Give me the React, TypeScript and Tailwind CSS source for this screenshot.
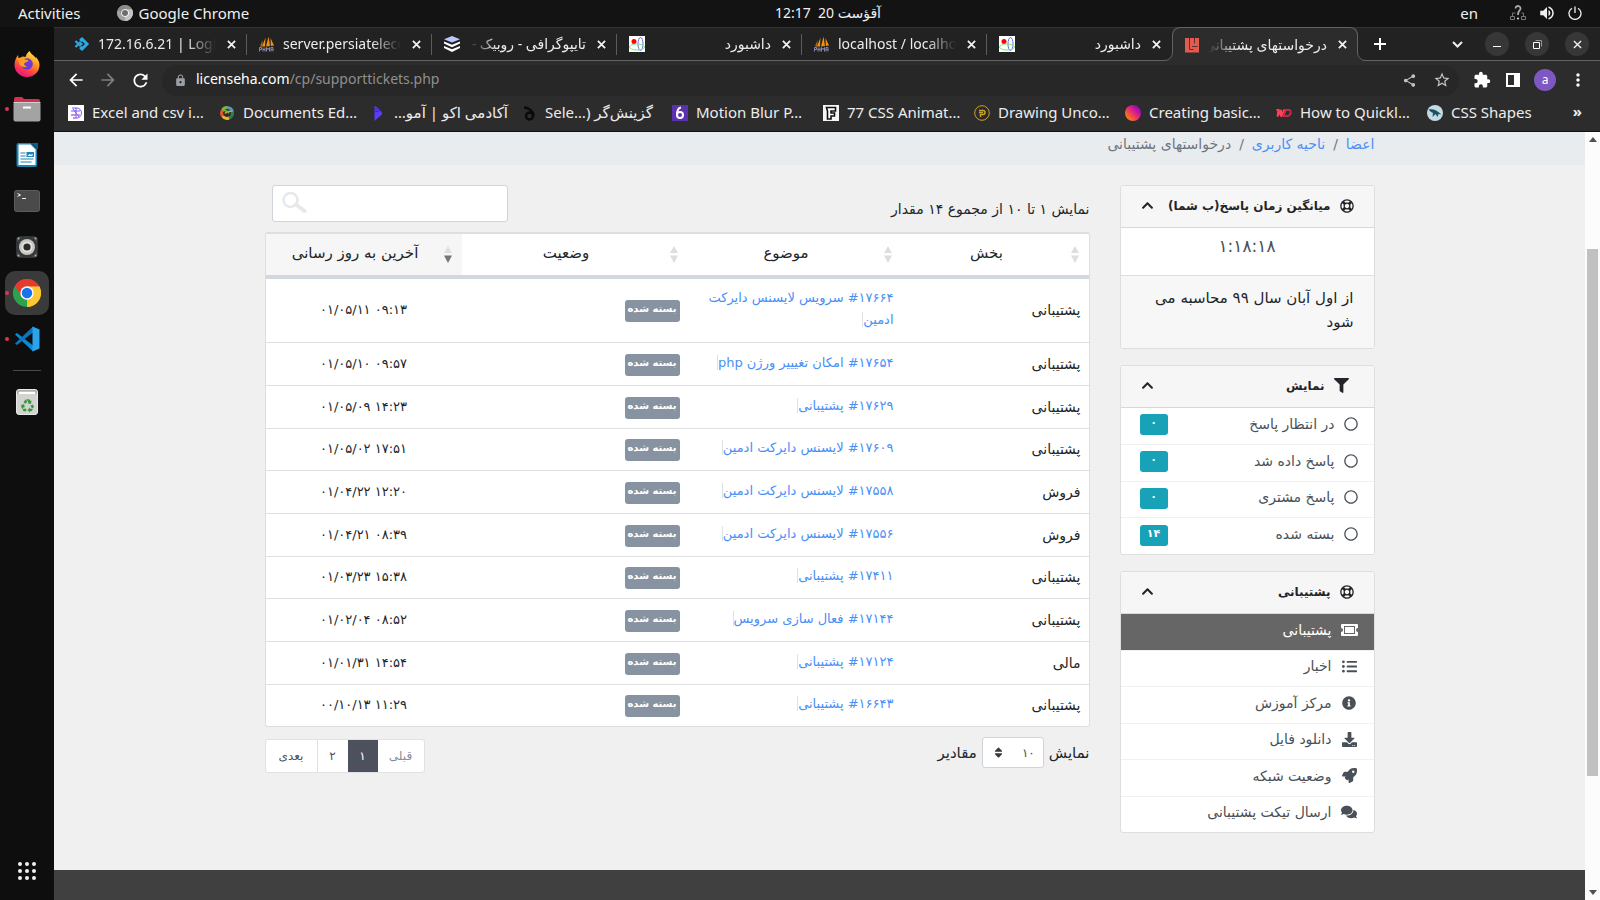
import type { ReactNode } from 'react';
import {
  FaChevronUp,
  FaComments,
  FaDownload,
  FaFilter,
  FaInfoCircle,
  FaListUl,
  FaRegCircle,
  FaRegLifeRing,
  FaRocket,
  FaSort,
} from 'react-icons/fa';
import {
  MdArrowBack,
  MdArrowForward,
  MdExtension,
  MdLock,
  MdMoreVert,
  MdRecycling,
  MdRefresh,
  MdShare,
  MdStarBorder,
  MdVolumeUp,
} from 'react-icons/md';

/* ---------- small drawings ---------- */

const ChromeLogo = ({ size, mono = false }: { size: number; mono?: boolean }) => (
  <svg width={size} height={size} viewBox="0 0 48 48" aria-hidden="true">
    <path d="M24 24 3.2 12A24 24 0 0 1 44.8 12Z" fill={mono ? '#8b8b8b' : '#ea4335'} />
    <path d="M24 24 44.8 12A24 24 0 0 1 24 48Z" fill={mono ? '#c4c4c4' : '#fbc116'} />
    <path d="M24 24V48A24 24 0 0 1 3.2 12Z" fill={mono ? '#a2a2a2' : '#2ba24c'} />
    <path d="M24 13h20.8A24 24 0 0 0 3.2 12l11.2 17.500Z" fill={mono ? '#8b8b8b' : '#e33b2e'} />
    <path d="M33.500 29.500 24 48A24 24 0 0 0 44.800 13H24Z" fill={mono ? '#c4c4c4' : '#fcc934'} />
    <circle cx="24" cy="24" r="11.500" fill="#fff" />
    <circle cx="24" cy="24" r="9" fill={mono ? '#6d6d6d' : '#1a73e8'} />
  </svg>
);

const Firefox = () => (
  <svg width="26" height="27" viewBox="0 0 26 27" aria-hidden="true">
    <defs>
      <linearGradient id="ff" x1="0.8" y1="0" x2="0.3" y2="1">
        <stop offset="0" stopColor="#fff04a" />
        <stop offset="0.4" stopColor="#ff9a1f" />
        <stop offset="0.75" stopColor="#ff3750" />
        <stop offset="1" stopColor="#e31587" />
      </linearGradient>
    </defs>
    <path d="M15.500 1c1 2 2 3 4 4.500 1 1 1.500 1.500 2 2.500l.5-1c2 2.500 3.500 5 3.500 8A12.500 12 0 0 1 .5 15C.5 11 2 7.500 4 5l.5 3 2-.5C8.500 6 10 6.500 11.500 7c1-3 2-4.500 4-6Z" fill="url(#ff)" />
    <circle cx="13" cy="14" r="5.800" fill="#6a3bd8" />
    <path d="M3 8c3 0 5-.5 7 1 1.500 1 3 .5 4.500 1.500-1 2-3 1.500-4 2.500-1 1.500.5 3.500 3 3.500-4 2-8-1-8.500-4Z" fill="#ff9d22" />
  </svg>
);

const Files = () => (
  <svg width="28" height="26" viewBox="0 0 28 26" aria-hidden="true">
    <path d="M1 3a2 2 0 0 1 2-2h6l2 2h14a2 2 0 0 1 2 2v8H1Z" fill="#d2324f" />
    <rect x="0.500" y="6" width="27" height="19.500" rx="2" fill="#a3a3a3" />
    <rect x="0.500" y="6" width="27" height="1" fill="#d0d0d0" />
    <rect x="10" y="10.500" width="8" height="2" rx="0.500" fill="#fff" />
  </svg>
);

const Writer = () => (
  <svg width="22" height="26" viewBox="0 0 22 26" aria-hidden="true">
    <path d="M2.500 1H15l6 6v16a2 2 0 0 1-2 2H2.500a2 2 0 0 1-2-2V3a2 2 0 0 1 2-2Z" fill="#1a83b8" />
    <path d="M3 2.500h11.500l5 5V23H2.500V3Z" fill="#fff" />
    <path d="M15.500 1H22v6.500Z" fill="#0f5f8c" />
    <path d="M4.500 11h5m-5 3h5m-5 3h13m-13 3h11" stroke="#1a83b8" strokeWidth="1.200" />
    <rect x="10.500" y="10" width="7.500" height="5" fill="#1a83b8" />
    <path d="m11.500 14 2-2 1.500 1 1.500-1.500V14Z" fill="#fff" />
  </svg>
);

const Terminal = () => (
  <svg width="26" height="22" viewBox="0 0 26 22" aria-hidden="true">
    <rect x="0.500" y="0.500" width="25" height="21" rx="2" fill="#4a4a4a" stroke="#5c5c5c" />
    <path d="m3.500 3.500 3 1.500-3 1.500M8 8.500h4" stroke="#eee" fill="none" strokeWidth="1" />
  </svg>
);

const Speaker = () => (
  <svg width="24" height="24" viewBox="0 0 24 24" aria-hidden="true">
    <rect x="1.500" y="1.500" width="21" height="21" rx="3" fill="#4b4f50" />
    <circle cx="12" cy="12" r="11" fill="#33383a" />
    <circle cx="12" cy="12" r="8" fill="#c8c4bf" />
    <circle cx="12" cy="12" r="5.500" fill="#e4e1dc" />
    <circle cx="12" cy="12" r="3.600" fill="#2b2b2b" />
    <g fill="#aaa">
      <circle cx="3.500" cy="3.500" r="1" />
      <circle cx="20.500" cy="3.500" r="1" />
      <circle cx="3.500" cy="20.500" r="1" />
      <circle cx="20.500" cy="20.500" r="1" />
    </g>
  </svg>
);

const VsCode = () => (
  <svg width="26" height="26" viewBox="0 0 26 26" aria-hidden="true">
    <path d="M1 8.500 3 7l16 12.500V25.500Z" fill="#0d8ad6" />
    <path d="M1 17.500 3 19 19 6.500V.5Z" fill="#0b74bb" />
    <path d="M18.500.5 25.500 3.500v19l-7 3Z" fill="#2ba4ee" />
  </svg>
);

const Trash = () => (
  <span className="relative block h-[26px] w-[22px] rounded-[3px] border border-[#e8e8e8] bg-[#d3d3d0]">
    <svg width="20" height="6" viewBox="0 0 20 6" className="block" aria-hidden="true">
      <path d="M1 4V1h18v3" stroke="#8a8a8a" fill="#fff" />
    </svg>
    <MdRecycling size={15} color="#2f9a34" className="absolute left-[3px] top-2" />
  </span>
);

const PhpMyAdmin = () => (
  <svg width="16" height="16" viewBox="0 0 16 16" aria-hidden="true">
    <path d="M6.500 1.500 3 10.500h3ZM9.500.5 7 10.500l4-.5ZM11.500 2l.3 8L15 9.500Z" fill="#f29111" />
    <path d="M3.500 4 1 10.500h2.500Z" fill="#b06b1c" />
    <path d="M.5 15.500v-4h2v2h-2m3.500 2v-4m2 4v-4m-2 2h2m1.500 2v-4l1.500 2 1.500-2v4m1.500 0v-4h2v4m-2-2h2" stroke="#8587ad" fill="none" />
  </svg>
);

const Layers = () => (
  <svg width="16" height="16" viewBox="0 0 16 16" aria-hidden="true">
    <path d="m8 0 8 3.200L8 6.500 0 3.200Z" fill="#b9c9ff" />
    <path d="m0 5.500 8 3.300 8-3.300v2L8 11.200 0 7.500Zm0 4.500 8 3.300 8-3.300v2L8 16l-8-4Z" fill="#fff" />
  </svg>
);

const Dots = () => (
  <svg width="16" height="16" viewBox="0 0 16 16" aria-hidden="true">
    <rect width="16" height="16" fill="#fff" />
    <circle cx="5" cy="5.500" r="2.500" fill="#f00" />
    <ellipse cx="11.500" cy="8" rx="2.500" ry="6.500" fill="none" stroke="#6b6be0" />
    <ellipse cx="8" cy="11" rx="7.500" ry="3" fill="none" stroke="#7de87d" />
  </svg>
);

const Logo16 = () => (
  <svg width="16" height="16" viewBox="0 0 16 16" aria-hidden="true">
    <rect x="1" y="1" width="14" height="14.500" fill="#e35a4f" />
    <path d="M5.500 1v8.500M10.500 1v5.500M8 9.500h5.500M5.500 9.500v3h4" stroke="#5d2f2c" fill="none" strokeWidth="1" />
  </svg>
);

const BlueArrows = () => (
  <svg width="16" height="16" viewBox="0 0 16 16" aria-hidden="true">
    <path d="m1.500 5 3 3-3 3M6 3l2 2.500M6 13l2-2.500" stroke="#2aa9e6" strokeWidth="2.200" fill="none" />
    <path d="m7 2 6 6-6 6" stroke="#2aa9e6" strokeWidth="3" fill="none" />
    <path d="m5 6 2.500 2L5 10" stroke="#2aa9e6" strokeWidth="2" fill="none" />
  </svg>
);

const Cross = ({ size = 9, width = 2 }: { size?: number; width?: number }) => (
  <svg width={size} height={size} viewBox="0 0 10 10" aria-hidden="true">
    <path d="m1 1 8 8M9 1 1 9" stroke="#f2f2f2" strokeWidth={width} />
  </svg>
);

const Ticket = () => (
  <svg width="17" height="12" viewBox="0 0 17 12" aria-hidden="true">
    <path d="M1 0h15a1 1 0 0 1 1 1v3a2 2 0 0 0 0 4v3a1 1 0 0 1-1 1H1a1 1 0 0 1-1-1V8a2 2 0 0 0 0-4V1a1 1 0 0 1 1-1Z" fill="#fff" />
    <rect x="3.500" y="2.500" width="10" height="7" fill="#fff" stroke="#666" />
  </svg>
);

/* ---------- browser data ---------- */

type Tab = { title: string; icon: ReactNode; rtl?: boolean };

const tabs: Tab[] = [
  { title: '172.16.6.21 | Login', icon: <BlueArrows /> },
  { title: 'server.persiatelecom', icon: <PhpMyAdmin /> },
  { title: 'تایپوگرافی - روبیک - راهنما', icon: <Layers />, rtl: true },
  { title: 'داشبورد', icon: <Dots />, rtl: true },
  { title: 'localhost / localhost', icon: <PhpMyAdmin /> },
  { title: 'داشبورد', icon: <Dots />, rtl: true },
];

const bookmarks: { title: ReactNode; icon: ReactNode; rtl?: boolean }[] = [
  {
    title: 'Excel and csv i…',
    icon: (
      <svg width="16" height="16" viewBox="0 0 16 16">
        <rect width="16" height="16" fill="#fff" />
        <path d="M4 3h5a4.500 5 0 0 1 0 10H5M3 6h9M3 10h9M8 3v10M5 4l6 8" stroke="#7b5cf0" fill="none" />
        <path d="M9 13H5M3 10h8" stroke="#d070f0" />
      </svg>
    ),
  },
  {
    title: 'Documents Ed…',
    icon: (
      <svg width="16" height="16" viewBox="0 0 16 16" fill="none" strokeWidth="3">
        <path d="M8 2.500A5.500 5.500 0 0 1 13.500 7" stroke="#4a9bd0" />
        <path d="M13.500 7A5.500 5.500 0 0 1 10 13" stroke="#2f7f55" />
        <path d="M10 13A5.500 5.500 0 0 1 3.500 11" stroke="#f0b429" />
        <path d="M3.500 11A5.500 5.500 0 0 1 3.500 5" stroke="#e4572e" />
        <path d="M3.500 5A5.500 5.500 0 0 1 8 2.500" stroke="#7ab648" />
        <path d="M6 8.500C7 7 9 6 13 6.500" stroke="#e0a030" strokeWidth="1.500" />
        <path d="M4 6c2-1 5 0 6 2.500" stroke="#7ab648" strokeWidth="1.500" />
      </svg>
    ),
  },
  {
    title: 'آکادمی اکو | آمو…',
    rtl: true,
    icon: (
      <svg width="16" height="16" viewBox="0 0 16 16">
        <path d="m4.500 1 3 1.500 4.500 5v2L4.500 16Z" fill="#5b3df5" />
        <path d="m4.500 4.500 4-1M4.500 7l6-1.500" stroke="#3a22c0" />
      </svg>
    ),
  },
  {
    title: (
      <>
        گزینش‌گر (<bdi dir="ltr">Sele…</bdi>
      </>
    ),
    rtl: true,
    icon: (
      <svg width="16" height="16" viewBox="0 0 16 16">
        <path d="M3 2.500c4 0 9 3 9.500 8" stroke="#0a0a0a" strokeWidth="2.500" fill="none" />
        <circle cx="8.500" cy="11" r="3.500" stroke="#0a0a0a" strokeWidth="2.500" fill="none" />
      </svg>
    ),
  },
  {
    title: 'Motion Blur P…',
    icon: (
      <svg width="16" height="16" viewBox="0 0 16 16">
        <rect width="16" height="16" fill="#5a32b0" />
        <circle cx="8" cy="10" r="3" stroke="#fff" strokeWidth="2" fill="none" />
        <path d="M5 10c0-4 1-7 4-7.500" stroke="#fff" strokeWidth="2" fill="none" />
      </svg>
    ),
  },
  {
    title: '77 CSS Animat…',
    icon: (
      <svg width="16" height="16" viewBox="0 0 16 16">
        <rect width="16" height="16" fill="#f5f5f5" />
        <path d="M3.500 2.500h9v3.500H8v2h3.500v3H8v3H4.500v-8Z" fill="#fff" stroke="#111" strokeWidth="1.600" />
      </svg>
    ),
  },
  {
    title: 'Drawing Unco…',
    icon: (
      <svg width="16" height="16" viewBox="0 0 16 16" fill="none" stroke="#c9a227">
        <circle cx="8" cy="8" r="7.300" />
        <path d="M5 5.500h4a2 2 0 0 1 0 4H6.500V12M5 7.500h4" strokeWidth="1.500" />
      </svg>
    ),
  },
  {
    title: 'Creating basic…',
    icon: (
      <svg width="16" height="16" viewBox="0 0 16 16">
        <defs>
          <linearGradient id="cb" x1="0" y1="1" x2="1" y2="0">
            <stop offset="0.100" stopColor="#ff8a00" />
            <stop offset="0.500" stopColor="#e52e71" />
            <stop offset="0.900" stopColor="#8a00c8" />
          </linearGradient>
        </defs>
        <circle cx="8" cy="8" r="8" fill="url(#cb)" />
      </svg>
    ),
  },
  {
    title: 'How to Quickl…',
    icon: (
      <svg width="16" height="16" viewBox="0 0 16 16" fill="none" strokeWidth="2">
        <path d="M.5 5h2l-1 6.500L5 5v6.500L8.500 4.500" stroke="#ff4058" />
        <path d="M9 5h4c3 0 2 6-2 6H7.500l2-5" stroke="#c22a48" />
      </svg>
    ),
  },
  {
    title: 'CSS Shapes',
    icon: (
      <svg width="16" height="16" viewBox="0 0 16 16">
        <circle cx="8" cy="8" r="8" fill="#c3dbe2" />
        <path d="M1.500 4.500c4-1 8 0 13 5l-3-.5-1 3-2-3c-1 1-2 2-3 3l.5-4c-2-1-3.500-2-4.500-3.500Z" fill="#1f4f63" />
      </svg>
    ),
  },
];

const dockItems: { name: string; icon: ReactNode; running?: boolean; active?: boolean }[] = [
  { name: 'Firefox', icon: <Firefox /> },
  { name: 'Files', icon: <Files />, running: true },
  { name: 'LibreOffice Writer', icon: <Writer /> },
  { name: 'Terminal', icon: <Terminal /> },
  { name: 'Rhythmbox', icon: <Speaker /> },
  { name: 'Google Chrome', icon: <ChromeLogo size={28} />, running: true, active: true },
  { name: 'Visual Studio Code', icon: <VsCode />, running: true },
];

/* ---------- ticket data ---------- */

const tickets = [
  { dept: 'پشتیبانی', subject: '#۱۷۶۶۴ سرویس لایسنس دایرکت ادمین', date: '۰۱/۰۵/۱۱ ۰۹:۱۳' },
  { dept: 'پشتیبانی', subject: '#۱۷۶۵۴ امکان تغیییر ورژن php', date: '۰۱/۰۵/۱۰ ۰۹:۵۷' },
  { dept: 'پشتیبانی', subject: '#۱۷۶۲۹ پشتیبانی', date: '۰۱/۰۵/۰۹ ۱۴:۲۳' },
  { dept: 'پشتیبانی', subject: '#۱۷۶۰۹ لایسنس دایرکت ادمین', date: '۰۱/۰۵/۰۲ ۱۷:۵۱' },
  { dept: 'فروش', subject: '#۱۷۵۵۸ لایسنس دایرکت ادمین', date: '۰۱/۰۴/۲۲ ۱۲:۲۰' },
  { dept: 'فروش', subject: '#۱۷۵۵۶ لایسنس دایرکت ادمین', date: '۰۱/۰۴/۲۱ ۰۸:۳۹' },
  { dept: 'پشتیبانی', subject: '#۱۷۴۱۱ پشتیبانی', date: '۰۱/۰۳/۲۳ ۱۵:۳۸' },
  { dept: 'پشتیبانی', subject: '#۱۷۱۴۴ فعال سازی سرویس', date: '۰۱/۰۲/۰۴ ۰۸:۵۲' },
  { dept: 'مالی', subject: '#۱۷۱۲۴ پشتیبانی', date: '۰۱/۰۱/۳۱ ۱۴:۵۴' },
  { dept: 'پشتیبانی', subject: '#۱۶۶۴۳ پشتیبانی', date: '۰۰/۱۰/۱۳ ۱۱:۲۹' },
];

const columns = [
  { label: 'بخش', width: 'w-[187px]' },
  { label: 'موضوع', width: 'w-[214px]' },
  { label: 'وضعیت', width: 'w-[226px]' },
  { label: 'آخرین به روز رسانی', width: 'w-auto', sorted: true },
];

const filters = [
  { label: 'در انتظار پاسخ', count: '۰' },
  { label: 'پاسخ داده شد', count: '۰' },
  { label: 'پاسخ مشتری', count: '۰' },
  { label: 'بسته شده', count: '۱۴' },
];

const supportLinks: { label: string; icon: ReactNode; active?: boolean }[] = [
  { label: 'پشتیبانی', icon: <Ticket />, active: true },
  { label: 'اخبار', icon: <FaListUl size={15} /> },
  { label: 'مرکز آموزش', icon: <FaInfoCircle size={14} /> },
  { label: 'دانلود فایل', icon: <FaDownload size={15} /> },
  { label: 'وضعیت شبکه', icon: <FaRocket size={15} /> },
  { label: 'ارسال تیکت پشتیبانی', icon: <FaComments size={16} /> },
];

/* ---------- desktop parts ---------- */

function TopBar() {
  return (
    <header className="grid h-[27px] shrink-0 grid-cols-3 items-center bg-[#131313] pb-0.5 text-[15px] leading-5 text-[#f0f0f0]">
      <div className="flex items-center gap-9 pl-[18px]">
        <button type="button">Activities</button>
        <button type="button" className="flex items-center gap-1.5">
          <ChromeLogo size={16} mono />
          Google Chrome
        </button>
      </div>
      <div dir="rtl" className="whitespace-pre pl-14 text-center text-[14px]">
        آقؤست 20  12:17
      </div>
      <div className="flex items-center justify-end gap-3 pr-[18px]">
        <span className="pr-5">en</span>
        <svg width="16" height="16" viewBox="0 0 16 16" fill="none" stroke="#777" aria-hidden="true">
          <path d="M.5 11.500h4v3h-4ZM11.500 11.500h4v3h-4ZM2.500 11.500V8h3M13.500 11.500V8h-2" />
          <path d="M5.500 3.500a2.500 2.500 0 1 1 4 2C8.500 6.500 8 7 8 10" stroke="#aaa" strokeWidth="1.800" />
          <circle cx="8" cy="13.500" r="1" fill="#eee" stroke="none" />
        </svg>
        <MdVolumeUp size={18} />
        <svg width="14" height="14" viewBox="0 0 14 14" fill="none" stroke="#f0f0f0" strokeWidth="1.300" aria-hidden="true">
          <path d="M4 2.200a6 6 0 1 0 6 0M7 .5v6.500" />
        </svg>
      </div>
    </header>
  );
}

function Dock() {
  return (
    <nav aria-label="Dock" className="flex w-[54px] shrink-0 flex-col items-center bg-[#0e0e0e] pb-4 pt-[13px]">
      {dockItems.map((item) => (
        <button key={item.name} type="button" aria-label={item.name} className="relative flex h-[46px] w-full items-center justify-center">
          <span className={item.active ? 'flex size-11 items-center justify-center rounded-[10px] bg-[#3a3a3a]' : 'flex size-11 items-center justify-center'}>
            {item.icon}
          </span>
          {item.running && <span className="absolute left-[5px] top-[21px] size-1 rounded-full bg-[#d93654]" />}
        </button>
      ))}
      <hr className="my-2 w-7 border-[#4a4a4a]" />
      <button type="button" aria-label="Trash" className="flex h-[46px] items-center">
        <Trash />
      </button>
      <button type="button" aria-label="Show applications" className="mt-auto p-1">
        <svg width="18" height="18" viewBox="0 0 18 18" fill="#f0f0f0" aria-hidden="true">
          {[2, 9, 16].map((y) => [2, 9, 16].map((x) => <circle key={`${x}-${y}`} cx={x} cy={y} r="2" />))}
        </svg>
      </button>
    </nav>
  );
}

function TabTitle({ title, rtl }: { title: string; rtl?: boolean }) {
  return (
    <span
      dir={rtl ? 'rtl' : 'ltr'}
      className={
        rtl
          ? 'min-w-0 flex-1 overflow-hidden whitespace-nowrap [mask-image:linear-gradient(to_left,#000_75%,transparent)]'
          : 'min-w-0 flex-1 overflow-hidden whitespace-nowrap [mask-image:linear-gradient(to_right,#000_75%,transparent)]'
      }
    >
      {title}
    </span>
  );
}

function TabStrip() {
  return (
    <div className="flex h-[34px] border-b border-t border-b-[#626262] border-t-[#333] bg-[#222] pl-2 text-[14px] leading-6 text-[#ececec]">
      {tabs.map((tab, i) => (
        <div key={i} className="flex w-[185px] items-center pl-3">
          {tab.icon}
          <span className="w-2" />
          <TabTitle title={tab.title} rtl={tab.rtl} />
          <button type="button" aria-label="Close tab" className="flex w-[30px] justify-center">
            <Cross />
          </button>
          <span className={i < tabs.length - 1 ? 'h-[21px] w-px bg-[#5c5c5c]' : 'h-[21px] w-px'} />
        </div>
      ))}
      <div className="relative -mb-px -mt-px flex w-[186px] items-center rounded-t-lg border border-b-0 border-[#626262] bg-[#2c2c2c] pl-[11px]">
        <svg width="9" height="9" viewBox="0 0 9 9" className="absolute -left-[9px] bottom-0" aria-hidden="true">
          <path d="M9 0v9H0A8.500 8.500 0 0 0 8.500 0Z" fill="#2c2c2c" />
          <path d="M0 8.500A8 8 0 0 0 8.500 0" fill="none" stroke="#626262" />
        </svg>
        <svg width="9" height="9" viewBox="0 0 9 9" className="absolute -right-[9px] bottom-0" aria-hidden="true">
          <path d="M0 0v9h9A8.500 8.500 0 0 1 .5 0Z" fill="#2c2c2c" />
          <path d="M9 8.500A8 8 0 0 1 .5 0" fill="none" stroke="#626262" />
        </svg>
        <Logo16 />
        <span className="w-2" />
        <TabTitle title="درخواستهای پشتیبانی - لایسنس" rtl />
        <button type="button" aria-label="Close tab" className="flex w-[30px] justify-center">
          <Cross />
        </button>
      </div>
      <button type="button" aria-label="New tab" className="ml-4">
        <svg width="12" height="12" viewBox="0 0 12 12" stroke="#fff" strokeWidth="2" aria-hidden="true">
          <path d="M6 0v12M0 6h12" />
        </svg>
      </button>
      <div className="ml-auto flex items-center gap-4 pr-[11px]">
        <button type="button" aria-label="Search tabs" className="mr-1.5">
          <svg width="11" height="7" viewBox="0 0 11 7" fill="none" stroke="#eee" strokeWidth="2" aria-hidden="true">
            <path d="m1 1 4.500 4.500L10 1" />
          </svg>
        </button>
        <button type="button" aria-label="Minimize" className="flex size-6 items-center justify-center rounded-full bg-[#373737]">
          <span className="mt-1 h-px w-2 bg-white" />
        </button>
        <button type="button" aria-label="Restore" className="flex size-6 items-center justify-center rounded-full bg-[#373737]">
          <svg width="9" height="9" viewBox="0 0 9 9" fill="none" aria-hidden="true">
            <path d="M.5 2.500h6v6h-6Z" stroke="#fff" />
            <path d="M2.500.5h6v6" stroke="#999" />
          </svg>
        </button>
        <button type="button" aria-label="Close window" className="flex size-6 items-center justify-center rounded-full bg-[#373737]">
          <Cross width={1.5} />
        </button>
      </div>
    </div>
  );
}

function Toolbar() {
  return (
    <div className="flex h-[38px] items-center bg-[#2c2c2c] pl-3 pr-3 text-white">
      <button type="button" aria-label="Back" className="w-8"><MdArrowBack size={20} /></button>
      <button type="button" aria-label="Forward" className="w-8 text-[#7d7d7d]"><MdArrowForward size={20} /></button>
      <button type="button" aria-label="Reload" className="w-8"><MdRefresh size={21} /></button>
      <div className="flex h-[31px] flex-1 items-center rounded-full bg-[#272727] pl-3 pr-2 text-[14px] leading-5">
        <MdLock size={13} className="text-[#9aa0a6]" />
        <span className="ml-[9px] flex-1 pb-0.5 text-[#8f8f8f]">
          <span className="text-white">licenseha.com</span>/cp/supporttickets.php
        </span>
        <button type="button" aria-label="Share" className="mr-4 text-[#c4c4c4]"><MdShare size={15} /></button>
        <button type="button" aria-label="Bookmark this page" className="text-[#c4c4c4]"><MdStarBorder size={18} /></button>
      </div>
      <button type="button" aria-label="Extensions" className="ml-3.5"><MdExtension size={18} /></button>
      <button type="button" aria-label="Side panel" className="ml-[15px]">
        <svg width="14" height="14" viewBox="0 0 14 14" aria-hidden="true">
          <path d="M0 0h14v14H0Zm2 2v10h6V2Z" fill="#fff" fillRule="evenodd" />
        </svg>
      </button>
      <button type="button" aria-label="Profile" className="ml-3.5 flex size-[22px] items-center justify-center rounded-full bg-[#7e57c2] text-[12px] leading-4">a</button>
      <button type="button" aria-label="Menu" className="ml-3"><MdMoreVert size={20} /></button>
    </div>
  );
}

function BookmarksBar() {
  return (
    <div className="flex h-[33px] items-center border-b border-[#14101a] bg-[#2c2c2c] pb-1 pl-3.5 pr-[18px] text-[15px] leading-6 text-[#ececec]">
      {bookmarks.map((b, i) => (
        <a key={i} href="#bookmark" className="flex w-[151px] shrink-0 items-center gap-2 whitespace-nowrap">
          <span className="shrink-0">{b.icon}</span>
          <span dir={b.rtl ? 'rtl' : 'ltr'} className="pb-0.5">{b.title}</span>
        </a>
      ))}
      <button type="button" aria-label="More bookmarks" className="-ml-10 flex-1 pb-1 text-right font-bold">»</button>
    </div>
  );
}

/* ---------- page parts ---------- */

function CardHeader({ icon, title }: { icon: ReactNode; title: string }) {
  return (
    <div className="flex h-[42px] items-center gap-[9px] border-b border-[#d8d8d8] bg-[#f6f6f6] pb-0.5 pl-5 pr-5 text-[#212529]">
      {icon}
      <h2 className="whitespace-nowrap text-[12px] font-bold leading-6">{title}</h2>
      <button type="button" aria-label="جمع کردن" className="mr-auto"><FaChevronUp size={13} /></button>
    </div>
  );
}

function Sidebar() {
  return (
    <aside className="flex w-[255px] shrink-0 flex-col gap-4">
      <section className="overflow-hidden rounded-[3px] border border-[#dedede] bg-white">
        <CardHeader icon={<FaRegLifeRing size={14} />} title="میانگین زمان پاسخ(ب شما)" />
        <p className="h-[47px] pt-1.5 text-center text-[17px] leading-6 text-[#495057]">۱:۱۸:۱۸</p>
        <p className="border-t border-[#dedede] bg-[#f7f7f7] pb-3.5 pl-6 pr-5 pt-2.5 text-[15px] leading-6">
          از اول آبان سال ۹۹ محاسبه می شود
        </p>
      </section>

      <section className="overflow-hidden rounded-[3px] border border-[#dedede] bg-white">
        <CardHeader icon={<FaFilter size={15} className="mr-[5px]" />} title="نمایش" />
        <ul className="flex h-[146px] flex-col divide-y divide-[#f1f1f1] text-[14px] leading-5 text-[#495057]">
          {filters.map((f) => (
            <li key={f.label} className="flex-1">
              <a href="#filter" className="flex h-full items-center pb-0.5 pl-[19px] pr-4">
                <FaRegCircle size={14} className="mb-0.5" />
                <span className="mr-[9px] pb-0.5">{f.label}</span>
                <span className="mr-auto flex h-[21px] w-7 justify-center rounded-[3px] bg-[#17a2b8] text-[11px] font-bold leading-[17px] text-white">
                  {f.count}
                </span>
              </a>
            </li>
          ))}
        </ul>
      </section>

      <section className="overflow-hidden rounded-[3px] border border-[#dedede] bg-white">
        <CardHeader icon={<FaRegLifeRing size={14} />} title="پشتیبانی" />
        <ul className="flex h-[218px] flex-col divide-y divide-[#f1f1f1] text-[14px] leading-5 text-[#495057]">
          {supportLinks.map((l) => (
            <li key={l.label} className="flex-1">
              <a href="#support" className={l.active ? 'flex h-full items-center bg-[#666] pb-1 pr-4 text-white' : 'flex h-full items-center pb-1 pr-4'}>
                <span className="flex w-[17px] justify-center">{l.icon}</span>
                <span className="mr-[9px]">{l.label}</span>
              </a>
            </li>
          ))}
        </ul>
      </section>
    </aside>
  );
}

function TicketTable() {
  return (
    <div className="overflow-hidden rounded-[3px] border border-t-2 border-[#dedede] bg-white">
      <table className="w-full table-fixed border-collapse text-[13px] leading-[22px] text-[#212529]">
        <thead>
          <tr className="border-b-4 border-[#d3d7e0]">
            {columns.map((c) => (
              <th
                key={c.label}
                scope="col"
                className={`${c.width} ${c.sorted ? 'bg-[#f6f6f6]' : ''} h-[43px] p-0 text-[15px] font-normal`}
              >
                <button type="button" className="flex w-full items-center pr-2.5">
                  <svg width="8" height="17" viewBox="0 0 8 17" aria-hidden="true">
                    <path d="M4 0 8 7H0Z" fill="#dedede" />
                    <path d="M4 17 8 9.500H0Z" fill={c.sorted ? '#777' : '#dedede'} />
                  </svg>
                  <span className="flex-1 pb-1 pl-px text-center">{c.label}</span>
                </button>
              </th>
            ))}
          </tr>
        </thead>
        <tbody>
          {tickets.map((t, i) => (
            <tr
              key={t.subject}
              className={
                i === 0 ? 'h-[65px]' : i % 3 === 0 ? 'h-[42px] border-t border-[#dedfe1]' : 'h-[43px] border-t border-[#dedfe1]'
              }
            >
              <td className="px-2 py-0 text-[14px]">{t.dept}</td>
              <td className="px-2 py-0 pb-0.5">
                <a href="#ticket" className="border-l border-[#dee2e6] text-[#4a8ff7]">{t.subject}</a>
              </td>
              <td className="px-2 py-0">
                <span className="mt-0.5 flex h-[22px] w-[55px] justify-center rounded-[3px] bg-[#8793a0] text-[10px] font-bold leading-[18px] text-white">
                  بسته شده
                </span>
              </td>
              <td className="p-0 text-center">
                <span dir="ltr">{t.date}</span>
              </td>
            </tr>
          ))}
        </tbody>
      </table>
    </div>
  );
}

function Tickets() {
  return (
    <main className="min-w-0 flex-1">
      <div className="flex h-[47px] items-start justify-between pl-[7px]">
        <p className="pt-3 text-[14px] leading-6">نمایش ۱ تا ۱۰ از مجموع ۱۴ مقدار</p>
        <div className="relative">
          <input
            type="search"
            aria-label="جستجو"
            className="block h-[37px] w-[236px] rounded-[3px] border border-[#ced4da] bg-white pl-10 pr-3 outline-none"
          />
          <svg width="25" height="22" viewBox="0 0 25 22" className="pointer-events-none absolute left-2.5 top-[7px]" fill="none" stroke="#e6e8ea" aria-hidden="true">
            <circle cx="8.500" cy="8" r="7" strokeWidth="2.500" />
            <path d="m14 12.500 8.500 6.500" strokeWidth="4" strokeLinecap="round" />
          </svg>
        </div>
      </div>
      <TicketTable />
      <div className="flex items-start justify-between pt-2.5">
        <label className="flex items-center gap-[5px] text-[15px] leading-6">
          نمایش
          <span className="relative">
            <select className="block h-[31px] w-[62px] appearance-none rounded-[3px] border border-[#ced4da] bg-white pr-2 text-[12px] text-[#495057]">
              <option>۱۰</option>
            </select>
            <FaSort size={13} className="pointer-events-none absolute left-2.5 top-[9px] text-[#343a40]" />
          </span>
          مقادیر
        </label>
        <nav aria-label="صفحه‌ها" className="mt-0.5 flex h-[34px] overflow-hidden rounded-[3px] border border-[#dee2e6] bg-white text-[12px] leading-5 text-[#4d515e]">
          <button type="button" className="w-[46px] text-[#868e96]">قبلی</button>
          <button type="button" className="w-[30px] bg-[#4d515e] text-white">۱</button>
          <button type="button" className="w-[30px]">۲</button>
          <button type="button" className="w-[52px] border-r border-[#dee2e6]">بعدی</button>
        </nav>
      </div>
    </main>
  );
}

function Page() {
  return (
    <div className="flex min-h-0 flex-1 bg-white">
      <div dir="rtl" className="flex min-w-0 flex-1 flex-col bg-[#f0f0f0] font-['DejaVu_Sans',sans-serif] text-[#212529]">
        <div className="h-[33px] bg-[#e9ecef]">
          <nav aria-label="مسیر" className="mx-auto flex max-w-[1110px] gap-2 text-[14px] leading-6 text-[#6c757d]">
            <a href="#members" className="text-[#4a8ff7]">اعضا</a>
            <span>/</span>
            <a href="#area" className="text-[#4a8ff7]">ناحیه کاربری</a>
            <span>/</span>
            <span>درخواستهای پشتیبانی</span>
          </nav>
        </div>
        <div className="mx-auto flex w-full max-w-[1110px] flex-1 items-start gap-[30px] pt-5">
          <Sidebar />
          <Tickets />
        </div>
        <footer className="h-[30px] bg-[#404040]" />
      </div>
      <div aria-hidden="true" className="flex w-[15px] shrink-0 flex-col items-center justify-between bg-[#fcfcfc] py-[5px]">
        <svg width="8" height="5" viewBox="0 0 8 5"><path d="m4 0 4 5H0Z" fill="#505050" /></svg>
        <div className="mt-[107px] w-[11px] flex-1 bg-[#c1c1c1]" />
        <svg width="8" height="5" viewBox="0 0 8 5" className="mt-[114px]"><path d="m4 5 4-5H0Z" fill="#505050" /></svg>
      </div>
    </div>
  );
}

export default function App() {
  return (
    <div className="flex h-screen flex-col overflow-hidden font-['Noto_Sans','DejaVu_Sans',sans-serif]">
      <TopBar />
      <div className="flex min-h-0 flex-1">
        <Dock />
        <div className="flex min-w-0 flex-1 flex-col">
          <TabStrip />
          <Toolbar />
          <BookmarksBar />
          <Page />
        </div>
      </div>
    </div>
  );
}
